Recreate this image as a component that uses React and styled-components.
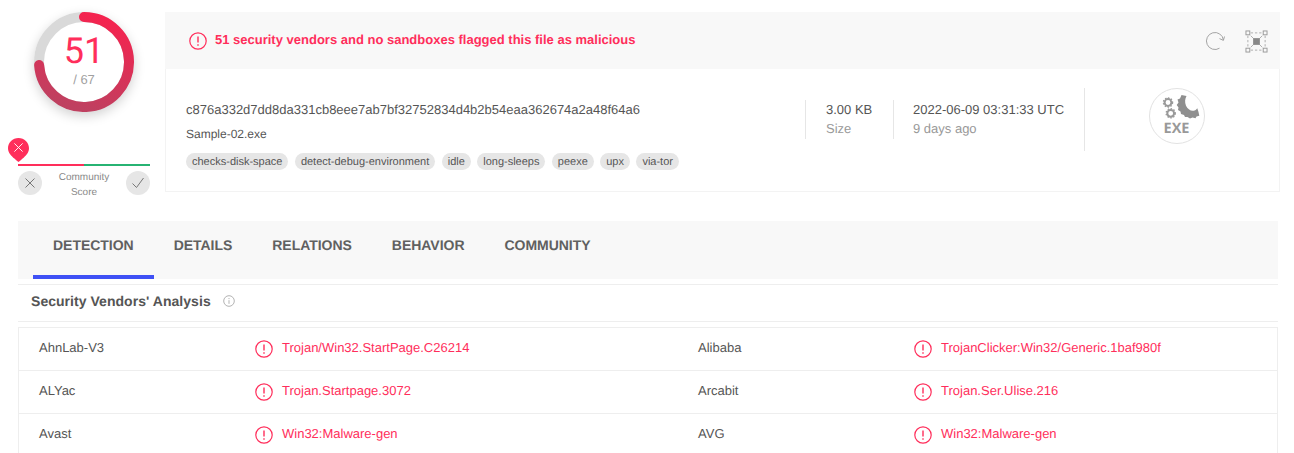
import React from "react";
import styled, { createGlobalStyle } from "styled-components";

const RED = "#ff2e5b";

const GlobalStyle = createGlobalStyle`
  html, body { margin: 0; padding: 0; background: #fff; }
  body {
    font-family: "Liberation Sans", Arial, sans-serif;
    color: #555;
    overflow: hidden;
    height: 453px;
    text-rendering: geometricPrecision;
  }
`;

const tags = ["checks-disk-space", "detect-debug-environment", "idle", "long-sleeps", "peexe", "upx", "via-tor"];
const tabs = ["DETECTION", "DETAILS", "RELATIONS", "BEHAVIOR", "COMMUNITY"];
const vendors = [
  ["AhnLab-V3", "Trojan/Win32.StartPage.C26214", "Alibaba", "TrojanClicker:Win32/Generic.1baf980f"],
  ["ALYac", "Trojan.Startpage.3072", "Arcabit", "Trojan.Ser.Ulise.216"],
  ["Avast", "Win32:Malware-gen", "AVG", "Win32:Malware-gen"],
];

const AlertIcon = ({ size = 18 }) => (
  <svg width={size} height={size} viewBox="0 0 18 18" fill="none" stroke={RED} strokeWidth="1.2">
    <circle cx="9" cy="9" r="8.2" />
    <path d="M9 4.4v6.2M9 12.2v1.5" strokeWidth="1.4" />
  </svg>
);

const Gauge = () => (
  <svg width="100" height="100" viewBox="0 0 100 100" fill="none">
    <defs>
      <linearGradient id="ring" x1="0.7" y1="0" x2="0.4" y2="1">
        <stop offset="0" stopColor="#f5234f" />
        <stop offset="1" stopColor="#bf4060" />
      </linearGradient>
    </defs>
    <circle cx="50" cy="50" r="45" stroke="#d9d9d9" strokeWidth="10" />
    <path d="M50 5A45 45 0 1 1 5.1 53" stroke="url(#ring)" strokeWidth="10" strokeLinecap="round" />
  </svg>
);

const CrossIcon = ({ color = "#777", size = 12, width = 1 }) => (
  <svg width={size} height={size} viewBox="0 0 12 12" fill="none" stroke={color} strokeWidth={width}>
    <path d="M1.5 1.5l9 9M10.5 1.5l-9 9" />
  </svg>
);

const CheckIcon = () => (
  <svg width="14" height="12" viewBox="0 0 14 12" fill="none" stroke="#777" strokeWidth="1">
    <path d="M1.5 6.5l4 4L12.5 1" />
  </svg>
);

const Pin = () => (
  <svg width="21" height="24" viewBox="0 0 21 24">
    <path d="M10.5 0C16.3 0 21 4.6 21 10.2c0 4.6-3.6 7.8-6.4 10.4-1.5 1.4-2.8 2.7-4.1 3.4-1.3-.7-2.6-2-4.1-3.4C3.6 18 0 14.8 0 10.2 0 4.6 4.7 0 10.5 0z" fill={RED} />
  </svg>
);

const RefreshIcon = () => (
  <svg width="20" height="18" viewBox="0 0 20 18" fill="none" stroke="#9a9a9a" strokeWidth="0.9">
    <path d="M14.5 16.2A8.5 8.5 0 1 1 18.4 8" />
    <path d="M14.5 6.6l3.9 1.8 1.1-3.9" />
  </svg>
);

const SelectIcon = () => (
  <svg width="23" height="23" viewBox="0 0 24 24" fill="none" stroke="#999" strokeWidth="1">
    <rect x="1" y="1" width="4" height="4" />
    <rect x="19" y="1" width="4" height="4" />
    <rect x="1" y="19" width="4" height="4" />
    <rect x="19" y="19" width="4" height="4" />
    <path d="M6 3h12M6 21h12M3 6v12M21 6v12" strokeDasharray="2.4 2" strokeWidth="0.8" />
    <path d="M6 6l3 3M18 6l-3 3M6 18l3-3M18 18l-3-3" strokeWidth="0.8" />
    <rect x="8.5" y="8.5" width="7" height="7" fill="#888" stroke="none" />
  </svg>
);

const Cog = ({ cx, cy, r }) => (
  <g>
    <circle cx={cx} cy={cy} r={r} fill="none" stroke="#999" strokeWidth="2" />
    <circle cx={cx} cy={cy} r={r + 1.2} fill="none" stroke="#999" strokeWidth="1.3" strokeDasharray="1.5 1.5" />
  </g>
);

const ExeIcon = () => (
  <svg width="56" height="56" viewBox="0 0 56 56" fill="none">
    <circle cx="28" cy="28" r="27.5" fill="#fff" stroke="#e2e2e2" />
    <Cog cx={19} cy={14.5} r={3.4} />
    <Cog cx={21.7} cy={25.3} r={3.4} />
    <path
      d="M32.5 7L37.5 8C36 11 35.5 14 37 17.7C38.5 21 42 23.5 45.5 22.5C46.5 22.2 47.5 21.5 48.3 20.3L49.5 24L50.3 27.7L47.5 28.5L46.5 30.3L43.5 29.5L41 30.5L38.5 29L36 29L35 27L32 26L31.5 23.5L29 22L29.5 19.5L27.7 17L29.5 14.5L28.5 11.5L31 10.5Z"
      fill="#8f8f8f"
    />
    <ExeLabel x="27.5" y="45" textAnchor="middle">EXE</ExeLabel>
  </svg>
);

const App = () => (
  <Page>
    <GlobalStyle />
    <TopRow>
      <ScoreColumn>
        <GaugeWrap>
          <Gauge />
          <GaugeText>
            <Positives>51</Positives>
            <Total>/ 67</Total>
          </GaugeText>
        </GaugeWrap>
        <Community>
          <PinMark>
            <Pin />
            <PinCross>
              <CrossIcon color="#fff" size={11} />
            </PinCross>
          </PinMark>
          <ScoreBar />
          <VoteRow>
            <VoteButton>
              <CrossIcon />
            </VoteButton>
            <VoteLabel>
              Community
              <br />
              Score
            </VoteLabel>
            <VoteButton>
              <CheckIcon />
            </VoteButton>
          </VoteRow>
        </Community>
      </ScoreColumn>

      <Card>
        <CardHeader>
          <AlertIcon />
          <Verdict>51 security vendors and no sandboxes flagged this file as malicious</Verdict>
          <Actions>
            <RefreshIcon />
            <SelectIcon />
          </Actions>
        </CardHeader>
        <CardBody>
          <FileInfo>
            <Hash>c876a332d7dd8da331cb8eee7ab7bf32752834d4b2b54eaa362674a2a48f64a6</Hash>
            <FileName>Sample-02.exe</FileName>
            <TagRow>
              {tags.map((tag) => (
                <Tag key={tag}>{tag}</Tag>
              ))}
            </TagRow>
          </FileInfo>
          <Stat $width="88px" $pad="20px">
            <StatValue>3.00 KB</StatValue>
            <StatLabel>Size</StatLabel>
          </Stat>
          <Stat $width="191px" $pad="19px">
            <StatValue>2022-06-09 03:31:33 UTC</StatValue>
            <StatLabel>9 days ago</StatLabel>
          </Stat>
          <FileType>
            <ExeIcon />
          </FileType>
        </CardBody>
      </Card>
    </TopRow>

    <TabBar>
      {tabs.map((tab, i) => (
        <Tab key={tab} $active={i === 0}>
          {tab}
        </Tab>
      ))}
    </TabBar>

    <SectionTitle>
      <TitleText>Security Vendors' Analysis</TitleText>
      <svg width="12" height="12" viewBox="0 0 12 12" fill="none" stroke="#aaa" strokeWidth="0.9">
        <circle cx="6" cy="6" r="5.3" />
        <path d="M6 5.2v3.6M6 3v1.1" />
      </svg>
    </SectionTitle>

    <VendorTable>
      {vendors.map((row) => (
        <VendorRow key={row[0]}>
          <VendorName>{row[0]}</VendorName>
          <Result>
            <AlertIcon />
            <span>{row[1]}</span>
          </Result>
          <VendorName>{row[2]}</VendorName>
          <Result>
            <AlertIcon />
            <span>{row[3]}</span>
          </Result>
        </VendorRow>
      ))}
    </VendorTable>
  </Page>
);

const Page = styled.div`
  width: 1294px;
  height: 453px;
  overflow: hidden;
  padding-top: 12px;
  box-sizing: border-box;
`;

const TopRow = styled.div`
  display: flex;
  align-items: flex-start;
  height: 179px;
  padding: 0 14px 0 18px;
  gap: 15px;
`;

const ScoreColumn = styled.div`
  width: 132px;
  flex: none;
  display: flex;
  flex-direction: column;
  align-items: center;
`;

const GaugeWrap = styled.div`
  position: relative;
  width: 100px;
  height: 100px;
  border-radius: 50%;
  box-shadow: 0 4px 12px rgba(0, 0, 0, 0.18);
  svg {
    display: block;
  }
`;

const GaugeText = styled.div`
  position: absolute;
  inset: 0;
  display: flex;
  flex-direction: column;
  align-items: center;
  padding-top: 20px;
`;

const Positives = styled.div`
  font-family: Roboto, "Liberation Sans", sans-serif;
  font-size: 36px;
  line-height: 38px;
  color: ${RED};
`;

const Total = styled.div`
  font-size: 13px;
  line-height: 16px;
  margin-top: 2px;
  color: #a0a0a0;
`;

const Community = styled.div`
  position: relative;
  width: 132px;
  margin-top: 52px;
`;

const PinMark = styled.div`
  position: absolute;
  left: -10px;
  top: -26px;
  width: 21px;
  height: 24px;
  svg {
    display: block;
  }
`;

const PinCross = styled.div`
  position: absolute;
  left: 5px;
  top: 4px;
`;

const ScoreBar = styled.div`
  height: 2px;
  background: linear-gradient(to right, ${RED} 50%, #27b373 50%);
`;

const VoteRow = styled.div`
  display: flex;
  justify-content: space-between;
  align-items: flex-start;
  margin-top: 5px;
`;

const VoteButton = styled.div`
  width: 24px;
  height: 24px;
  border-radius: 50%;
  background: #e6e6e6;
  display: flex;
  align-items: center;
  justify-content: center;
`;

const VoteLabel = styled.div`
  font-size: 10px;
  line-height: 15px;
  margin-top: -1px;
  color: #888;
  text-align: center;
`;

const Card = styled.div`
  flex: 1;
  height: 180px;
  box-sizing: border-box;
  border: 1px solid #f3f3f3;
  border-top: none;
`;

const CardHeader = styled.div`
  height: 57px;
  margin: 0 -1px;
  background: #f8f8f8;
  display: flex;
  align-items: center;
  padding: 0 12px 0 24px;
`;

const Verdict = styled.div`
  flex: 1;
  margin-left: 8px;
  margin-top: -3px;
  font-size: 13px;
  font-weight: 700;
  color: ${RED};
`;

const Actions = styled.div`
  display: flex;
  align-items: center;
  gap: 20px;
  margin-top: 1px;
`;

const CardBody = styled.div`
  display: flex;
  align-items: flex-start;
  padding-top: 19px;
`;

const FileInfo = styled.div`
  width: 639px;
  padding: 14px 0 0 20px;
  box-sizing: border-box;
`;

const Hash = styled.div`
  font-size: 13px;
  line-height: 16px;
  color: #555;
`;

const FileName = styled.div`
  font-size: 12px;
  line-height: 14px;
  margin-top: 9px;
  color: #555;
`;

const TagRow = styled.div`
  display: flex;
  gap: 6.4px;
  margin-top: 12px;
`;

const Tag = styled.span`
  height: 17px;
  line-height: 18px;
  padding: 0 6px;
  border-radius: 9px;
  background: #e6e6e6;
  font-size: 11px;
  color: #555;
`;

const Stat = styled.div`
  width: ${(p) => p.$width};
  height: 39px;
  margin-top: 12px;
  box-sizing: border-box;
  border-left: 1px solid #e6e6e6;
  padding-left: ${(p) => p.$pad};
  white-space: nowrap;
`;

const StatValue = styled.div`
  font-size: 13px;
  line-height: 16px;
  margin-top: 2px;
  color: #555;
`;

const StatLabel = styled.div`
  font-size: 13px;
  line-height: 16px;
  margin-top: 3px;
  color: #999;
`;

const FileType = styled.div`
  width: 193px;
  height: 63px;
  box-sizing: border-box;
  border-left: 1px solid #e6e6e6;
  padding-right: 8px;
  display: flex;
  justify-content: center;
  svg {
    display: block;
  }
`;

const ExeLabel = styled.text`
  font-family: "Open Sans", sans-serif;
  font-size: 14.5px;
  font-weight: 700;
  fill: #999;
`;

const TabBar = styled.div`
  display: flex;
  margin: 30px 16px 0 18px;
  height: 58px;
  padding-left: 15px;
  background: #f8f8f8;
`;

const Tab = styled.div`
  padding: 16px 20px 0;
  font-size: 14px;
  font-weight: 700;
  letter-spacing: -0.03px;
  color: #606060;
  box-sizing: border-box;
  border-bottom: 4px solid ${(p) => (p.$active ? "#3f51f5" : "transparent")};
`;

const SectionTitle = styled.div`
  margin: 5px 16px 0 18px;
  height: 38px;
  box-sizing: border-box;
  border-top: 1px solid #eee;
  border-bottom: 1px solid #eee;
  display: flex;
  align-items: center;
  gap: 12px;
  padding: 0 0 4px 13px;
`;

const TitleText = styled.div`
  font-size: 14px;
  font-weight: 700;
  letter-spacing: 0.04px;
  color: #555;
`;

const VendorTable = styled.div`
  margin: 5px 16px 0 18px;
  border: 1px solid #eee;
`;

const VendorRow = styled.div`
  display: grid;
  grid-template-columns: 215px 444px 215px 1fr;
  height: 43px;
  box-sizing: border-box;
  border-bottom: 1px solid #eee;
  padding-left: 20px;
  padding-top: 11px;
`;

const VendorName = styled.div`
  font-size: 13px;
  line-height: 18px;
  color: #555;
`;

const Result = styled.div`
  display: flex;
  align-items: flex-start;
  gap: 9px;
  font-size: 13px;
  line-height: 18px;
  color: ${RED};
  svg {
    margin: 1px 0 0 1px;
    flex: none;
  }
`;

export default App;
